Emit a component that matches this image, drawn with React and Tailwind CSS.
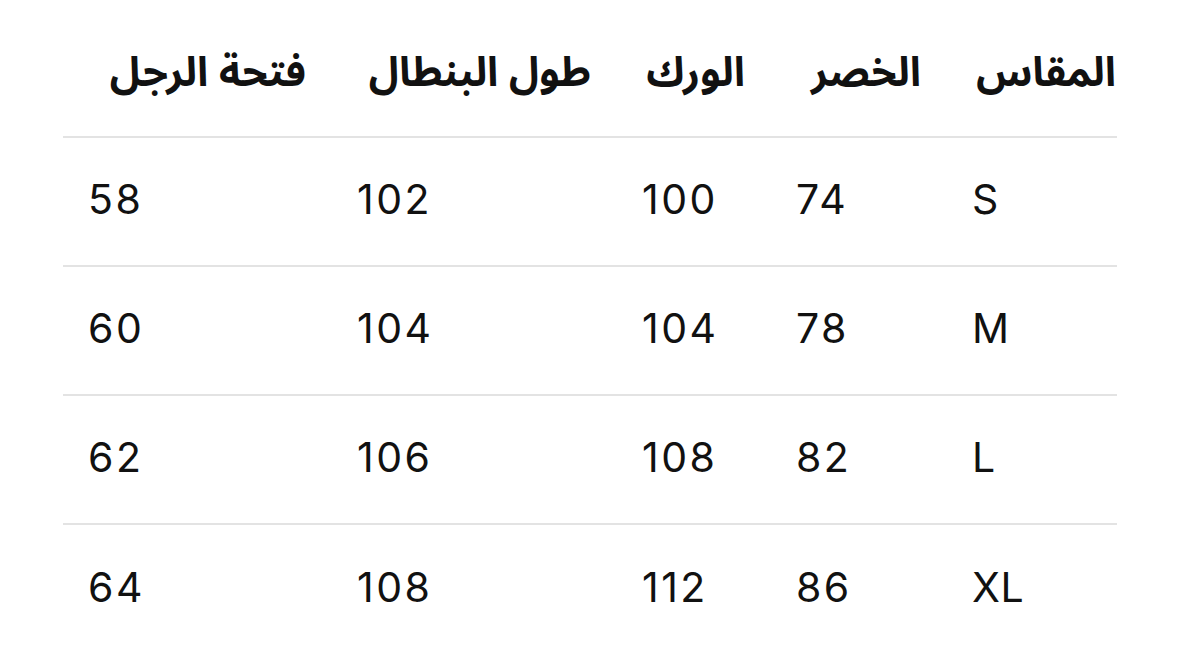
import React from 'react'

const headers = ['المقاس', 'الخصر', 'الورك', 'طول البنطال', 'فتحة الرجل']

const rows = [
  ['S', '74', '100', '102', '58'],
  ['M', '78', '104', '104', '60'],
  ['L', '82', '108', '106', '62'],
  ['XL', '86', '112', '108', '64'],
]

// header right padding per column (first column sits flush with the table edge)
const headPad = ['pr-[1px]', 'pr-[26px]', 'pr-[26px]', 'pr-[26px]', 'pr-[26px]']

export default function App() {
  return (
    <div className="min-h-[654px] w-full bg-white text-[#111]">
      <div dir="rtl" className="ml-[63px] mr-[62px]">
        <div className="grid grid-cols-[170px_176px_154px_285px_269px] h-[138px] border-b-2 border-[#e3e3e3]">
          {headers.map((h, i) => (
            <div
              key={h}
              className={`flex items-center pt-[12px] ${headPad[i]} font-bold text-[41px] font-['Noto_Sans_Arabic','DejaVu_Sans',sans-serif]`}
            >
              {h}
            </div>
          ))}
        </div>
        {rows.map((row, ri) => (
          <div
            key={row[0]}
            className={`grid grid-cols-[170px_176px_154px_285px_269px] h-[129px] ${ri < rows.length - 1 ? 'border-b-2 border-[#e3e3e3]' : ''}`}
          >
            {row.map((cell, ci) => (
              <div
                key={ci}
                dir="ltr"
                className={`flex items-center pl-[25px] pb-[4px] text-left text-[41px] font-['Inter','Liberation_Sans',sans-serif] ${ci === 0 ? 'tracking-[0.5px]' : 'tracking-[2.5px]'}`}
              >
                {cell}
              </div>
            ))}
          </div>
        ))}
      </div>
    </div>
  )
}
